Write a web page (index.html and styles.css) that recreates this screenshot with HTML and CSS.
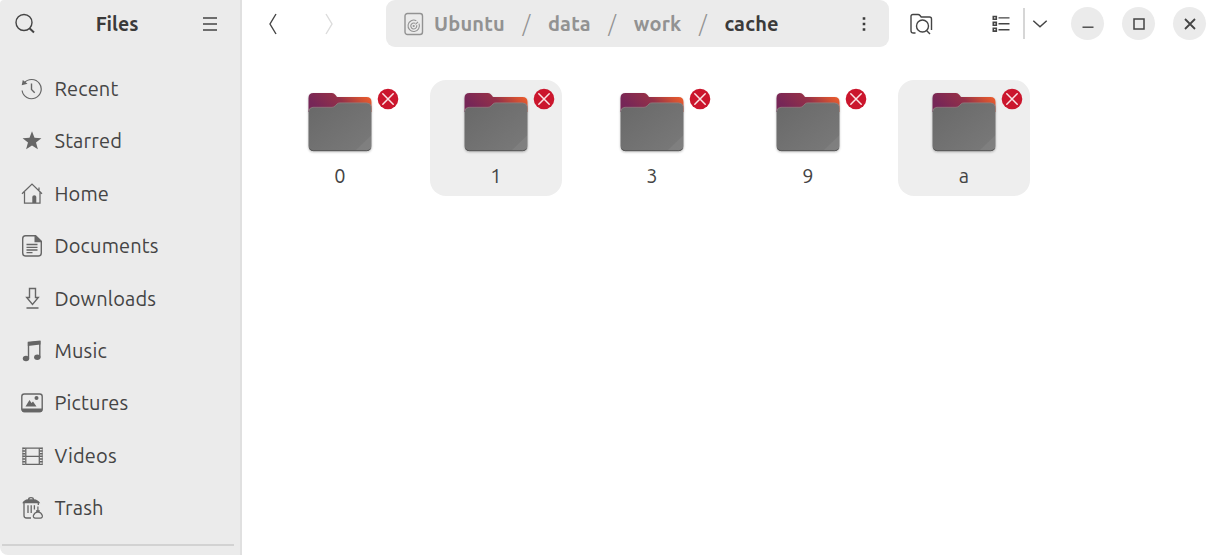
FILE: index.html
```html
<!DOCTYPE html>
<html lang="en">
<head>
    <meta charset="utf-8">
    <title>Files</title>
    <link rel="stylesheet" href="styles.css">
</head>
<body>
    <!-- shared folder artwork -->
    <svg class="defs" width="0" height="0">
        <defs>
            <linearGradient id="back" x1="0" y1="0.3" x2="1" y2="0">
                <stop offset="0" stop-color="#762657"/>
                <stop offset="0.45" stop-color="#953048"/>
                <stop offset="0.75" stop-color="#d04f34"/>
                <stop offset="1" stop-color="#f8622a"/>
            </linearGradient>
            <linearGradient id="front" x1="0" y1="0" x2="1" y2="1">
                <stop offset="0" stop-color="#686868"/>
                <stop offset="1" stop-color="#7a7a7a"/>
            </linearGradient>
        </defs>
        <symbol id="folder" viewBox="0 0 64 60">
            <path d="M0.500 6Q0.500 1 5.500 1H24Q26 1 27.500 3L29 5H58.500Q63.500 5 63.500 10V20H0.500Z" fill="url(#back)"/>
            <path d="M0.500 19.500Q1 15.500 5 15.500H24Q26 15.500 27.500 13.500L29 12Q30 11 32 11H58.500Q63.500 11 63.500 16V54Q63.500 59 58.500 59H5.500Q0.500 59 0.500 54Z" fill="url(#front)"/>
            <path d="M0.800 19Q1.500 15.300 5 15.300H24Q26 15.300 27.500 13.500L29 12Q30 10.900 32 10.900H58.500Q62.500 11 63.200 14.500" fill="none" stroke="#8f8080" stroke-width="0.800"/>
            <path d="M63.500 43V54Q63.500 59 58.500 59H47Z" fill="#fff" opacity="0.060"/>
            <path d="M1.500 56.500Q2.500 58.700 5.500 58.700H58.500Q61.500 58.700 62.700 56.500" fill="none" stroke="#555" stroke-width="0.900"/>
        </symbol>
        <symbol id="denied" viewBox="0 0 22 22">
            <circle cx="11" cy="11" r="10.300" fill="#cb162d"/>
            <path d="M5.800 5.800L16.200 16.200M16.200 5.800L5.800 16.200" stroke="#fbe4e6" stroke-width="1.500" stroke-linecap="round"/>
        </symbol>
    </svg>

    <div class="window">
        <aside class="sidebar">
            <header class="sidebar-header">
                <svg class="icon" width="22" height="22" viewBox="0 0 22 22"><circle cx="10" cy="9.500" r="8"/><path d="M15.500 15.200L20 19.500" stroke-width="2"/></svg>
                <h1>Files</h1>
                <svg class="icon" width="16" height="16" viewBox="0 0 16 16"><path d="M1 2H15M1 8H15M1 14H15"/></svg>
            </header>
            <nav class="places">
                <a class="place">
                    <svg class="icon" width="22" height="22" viewBox="0 0 22 22"><path d="M3.200 5A9.600 9.600 0 1 1 1.100 12.500" stroke-width="1.200"/><path d="M0.700 7.200L1.800 2L6.500 5.700Z" class="fill"/><path d="M10.500 5.500V11.500L13.700 14.700"/></svg>
                    <span>Recent</span>
                </a>
                <a class="place">
                    <svg class="icon" width="22" height="22" viewBox="0 0 22 22"><path class="fill" d="M11 1.300L13.500 7.800L20.400 8.200L15 12.500L16.900 19.300L11 15.500L5.100 19.300L7 12.500L1.600 8.200L8.500 7.800Z"/></svg>
                    <span>Starred</span>
                </a>
                <a class="place">
                    <svg class="icon" width="22" height="22" viewBox="0 0 22 22"><path d="M1 10.700L11 1L21 10.700M3.500 9V20H19V9M18 7V4.500" stroke-width="1.250"/><path class="fill" d="M11.300 20V14Q11.300 12.300 13.300 12.300Q15.300 12.300 15.300 14V20Z"/></svg>
                    <span>Home</span>
                </a>
                <a class="place">
                    <svg class="icon" width="22" height="22" viewBox="0 0 22 22"><path d="M4.500 0.800H14.500L20.300 6.500V18Q20.300 21 17.300 21H4.700Q1.700 21 1.700 18V3.800Q1.700 0.800 4.500 0.800Z"/><path class="fill" d="M13.500 0.500H15L20.800 6V7.200H13.500Z"/><path d="M5.500 9.500H16.500M5.500 12.300H16.500M5.500 15H16.500M5.500 17.700H11.500" stroke-width="1.300"/></svg>
                    <span>Documents</span>
                </a>
                <a class="place">
                    <svg class="icon" width="22" height="22" viewBox="0 0 22 22"><path d="M8.500 1.500H14.500V10.500H17.300L11.500 17.500L5.700 10.500H8.500ZM5.500 21H17.500"/></svg>
                    <span>Downloads</span>
                </a>
                <a class="place">
                    <svg class="icon" width="22" height="22" viewBox="0 0 22 22"><path d="M7.500 18.500V2.800L18.800 1.700V17.500"/><path class="fill" d="M6.800 1.800L19.500 0.500V4.500L6.800 5.900Z"/><ellipse class="fill" cx="5" cy="18.500" rx="3.200" ry="2.700"/><ellipse class="fill" cx="16.300" cy="17.300" rx="3.200" ry="2.700"/></svg>
                    <span>Music</span>
                </a>
                <a class="place">
                    <svg class="icon" width="22" height="22" viewBox="0 0 22 22"><rect x="0.800" y="2" width="20.400" height="17.500" rx="2.500"/><path class="fill" d="M0.800 16.500H21.200V18Q21.200 20.300 18.500 20.300H3.500Q0.800 20.300 0.800 18ZM4.500 14.500L8.500 8L10.500 11L12 9.500L15.500 14.500Z"/><circle class="fill" cx="15.500" cy="6" r="2"/></svg>
                    <span>Pictures</span>
                </a>
                <a class="place">
                    <svg class="icon" width="22" height="22" viewBox="0 0 22 22"><path d="M4.800 3.200H18.300M4.800 11.300H18.300M4.800 19.300H18.300M4.800 2.500V20M18.300 2.500V20" stroke-width="1.250"/><path d="M2.900 2.500V20M20.200 2.500V20" stroke-width="2.800" stroke-dasharray="1.500 1.200"/><path d="M1.800 2.500V20M21.300 2.500V20" stroke-width="0.700"/></svg>
                    <span>Videos</span>
                </a>
                <a class="place">
                    <svg class="icon" width="22" height="22" viewBox="0 0 22 22"><path class="fill" fill-rule="evenodd" d="M1.300 6.200Q3 2.600 7 2.300Q7 0 10 0Q13 0 13 2.300Q17 2.600 19.200 6.200ZM8.300 2.300H11.800Q11.500 1.200 10 1.200Q8.700 1.200 8.300 2.300Z"/><path d="M3 6V18.500Q3 21 5.500 21H10M17.300 6V8M7 8.300V16M10.200 8.300V16M13.400 8.300V12.500" stroke-width="1.300"/><path d="M16.900 9.500V14M15 13.800H18.800M14.300 21.200Q12 20.900 12.400 18.500Q13.500 15.300 16.900 14.800Q20.300 15.300 21.300 18.500Q21.700 20.900 19.400 21.200Z" stroke-width="1.200"/></svg>
                    <span>Trash</span>
                </a>
            </nav>
            <hr class="separator">
        </aside>

        <main class="content">
            <header class="toolbar">
                <svg class="icon back" width="12" height="22" viewBox="0 0 12 22"><path d="M9 1L3 11L9 21"/></svg>
                <svg class="icon forward" width="12" height="22" viewBox="0 0 12 22"><path d="M3 1L9 11L3 21"/></svg>
                <div class="pathbar">
                    <svg class="icon disk" width="20" height="24" viewBox="0 0 20 24"><rect x="1" y="1.500" width="17.500" height="21" rx="2.500"/><path d="M12.300 8.700A5.700 5.700 0 1 0 15 11.600M11.200 11.300A3 3 0 1 0 12.700 13.200M11.500 12.300L14 9.800" stroke-width="1.100"/><circle class="fill" cx="9.700" cy="14" r="1.100"/></svg>
                    <span class="crumb first">Ubuntu</span>
                    <span class="slash">/</span>
                    <span class="crumb">data</span>
                    <span class="slash">/</span>
                    <span class="crumb">work</span>
                    <span class="slash">/</span>
                    <span class="crumb current">cache</span>
                    <svg class="icon dots" width="4" height="16" viewBox="0 0 4 16"><path class="fill" d="M0.700 1.200H3.300V3.800H0.700ZM0.700 6.700H3.300V9.300H0.700ZM0.700 12.200H3.300V14.800H0.700Z"/></svg>
                </div>
                <svg class="icon find" width="24" height="22" viewBox="0 0 24 22"><path d="M6.500 20H4.500Q2 20 2 17.500V3.500Q2 1.500 4 1.500H9Q10.200 1.500 11 2.500L12.200 4H20.500Q22.500 4 22.500 6V17"/><circle cx="13.500" cy="13" r="6"/><path d="M17.500 17.500L21 21"/></svg>
                <svg class="icon list" width="18" height="18" viewBox="0 0 18 18"><path d="M1.300 1.500H4.300V4.300H1.300ZM1.300 7.400H4.300V10.200H1.300ZM1.300 13.300H4.300V16.100H1.300Z" stroke-width="1.600"/><path d="M6.500 2.900H17.500M6.500 8.800H17.500M6.500 14.700H17.500"/></svg>
                <span class="divider"></span>
                <svg class="icon chevron" width="16" height="10" viewBox="0 0 16 10"><path d="M1.300 1.800L8 7.800L14.700 1.800" stroke-width="1.500"/></svg>
                <div class="controls">
                    <button><svg class="icon" width="16" height="16" viewBox="0 0 16 16"><path d="M2.500 11.200H13.500"/></svg></button>
                    <button><svg class="icon" width="16" height="16" viewBox="0 0 16 16"><rect x="3" y="3" width="10" height="10" stroke-width="1.500"/></svg></button>
                    <button><svg class="icon" width="16" height="16" viewBox="0 0 16 16"><path d="M3 3L13 13M13 3L3 13" stroke-width="1.800"/></svg></button>
                </div>
            </header>
            <div class="grid">
                <div class="item">
                    <svg class="folder"><use href="#folder"/></svg>
                    <svg class="badge"><use href="#denied"/></svg>
                    <span>0</span>
                </div>
                <div class="item selected">
                    <svg class="folder"><use href="#folder"/></svg>
                    <svg class="badge"><use href="#denied"/></svg>
                    <span>1</span>
                </div>
                <div class="item">
                    <svg class="folder"><use href="#folder"/></svg>
                    <svg class="badge"><use href="#denied"/></svg>
                    <span>3</span>
                </div>
                <div class="item">
                    <svg class="folder"><use href="#folder"/></svg>
                    <svg class="badge"><use href="#denied"/></svg>
                    <span>9</span>
                </div>
                <div class="item selected">
                    <svg class="folder"><use href="#folder"/></svg>
                    <svg class="badge"><use href="#denied"/></svg>
                    <span>a</span>
                </div>
            </div>
        </main>
    </div>
</body>
</html>
```
FILE: styles.css
```css
* {
    box-sizing: border-box;
}
body {
    margin: 0;
    background: #fff;
    color: #444;
    font-family: Ubuntu, "Noto Sans", sans-serif;
    font-size: 20px;
    line-height: 26px;
    overflow: hidden;
}
.defs {
    display: block;
}
.window {
    display: flex;
    height: 555px;
}
.icon {
    display: block;
    flex: none;
    fill: none;
    stroke: currentColor;
    stroke-width: 1.4;
}
.icon .fill {
    fill: currentColor;
    stroke: none;
}

/* sidebar */
.sidebar {
    width: 242px;
    flex: none;
    background: #ebebeb;
    border-right: 2px solid #e0e0e0;
    border-radius: 4px 0 0 8px;
}
.sidebar-header {
    display: flex;
    align-items: center;
    justify-content: space-between;
    height: 47px;
    padding: 0 22px 0 14px;
}
.sidebar-header h1 {
    margin: 0 4px 0 0;
    color: #3a3a3a;
    font-size: 19.5px;
    font-weight: bold;
}
.places {
    padding-top: 15.6px;
}
.place {
    display: flex;
    align-items: center;
    gap: 11.5px;
    height: 52.4px;
    padding-left: 21px;
}
.place .icon {
    color: #666;
}
.place span {
    margin-top: 0.3px;
    letter-spacing: 0.15px;
}
.separator {
    margin: 10px 6px 0 2px;
    border: 0;
    border-top: 2px solid #d2d2d2;
}

/* toolbar */
.content {
    flex: 1;
}
.toolbar {
    display: flex;
    align-items: center;
    height: 47px;
    padding-left: 25px;
}
.forward {
    margin-left: 44px;
    color: #dcdcdc;
}
.pathbar {
    display: flex;
    align-items: center;
    width: 503.5px;
    height: 47px;
    margin-left: 50.5px;
    padding: 0 23px 0 18px;
    background: #ebebeb;
    border-radius: 9px;
    color: #929292;
    font-weight: bold;
}
.crumb {
    margin-top: 1px;
    letter-spacing: 0.2px;
}
.first {
    margin-left: 10.5px;
}
.slash {
    width: 43px;
    font-size: 22px;
    font-weight: 300;
    text-align: center;
}
.current,
.dots {
    color: #3a3a3a;
}
.dots {
    margin-left: auto;
}
.find {
    margin-left: 20px;
}
.list {
    margin-left: 59px;
}
.divider {
    width: 2px;
    height: 31px;
    margin-left: 13px;
    background: #d6d6d6;
}
.chevron {
    margin-left: 7px;
}
.controls {
    display: flex;
    gap: 18px;
    margin-left: 23px;
}
.controls button {
    display: flex;
    align-items: center;
    justify-content: center;
    width: 33px;
    height: 33px;
    padding: 0;
    border: 0;
    border-radius: 50%;
    background: #ebebeb;
    color: #444;
}

/* folder grid */
.grid {
    display: flex;
    gap: 24px;
    padding: 33px 0 0 32px;
}
.item {
    position: relative;
    display: flex;
    flex-direction: column;
    align-items: center;
    width: 132px;
    height: 116px;
    padding-top: 12px;
    border-radius: 16px;
}
.item.selected {
    background: #eee;
}
.item span {
    margin-top: 11px;
}
.folder {
    width: 64px;
    height: 60px;
    filter: drop-shadow(0 1px 1px rgba(0, 0, 0, 0.25));
}
.badge {
    position: absolute;
    top: 8px;
    right: 7px;
    width: 22px;
    height: 22px;
}
```
